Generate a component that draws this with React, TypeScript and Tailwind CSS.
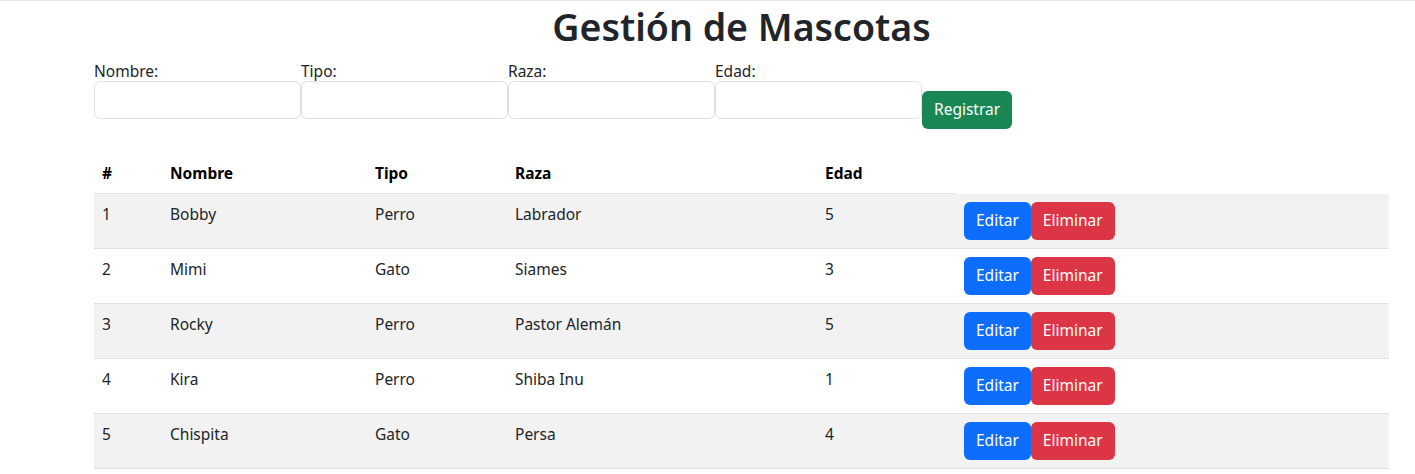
const mascotas = [
  { id: 1, nombre: "Bobby", tipo: "Perro", raza: "Labrador", edad: 5 },
  { id: 2, nombre: "Mimi", tipo: "Gato", raza: "Siames", edad: 3 },
  { id: 3, nombre: "Rocky", tipo: "Perro", raza: "Pastor Alemán", edad: 5 },
  { id: 4, nombre: "Kira", tipo: "Perro", raza: "Shiba Inu", edad: 1 },
  { id: 5, nombre: "Chispita", tipo: "Gato", raza: "Persa", edad: 4 },
];

const campos = ["Nombre", "Tipo", "Raza", "Edad"];

export default function App() {
  return (
    <div className="min-h-[474px] border-t border-[#e5e5e5] bg-white font-['Noto_Sans','Open_Sans',sans-serif] text-[15.5px] text-[#212529]">
      <div className="ml-[94px] w-[1295px]">
        <h1 className="pt-[2px] text-center text-[37.5px] font-semibold leading-[48px] text-[#212529]">
          Gestión de Mascotas
        </h1>

        <form className="mt-[10px] flex items-start" onSubmit={(e) => e.preventDefault()}>
          {campos.map((c) => (
            <div key={c} className="w-[207px]">
              <label className="block leading-[20px]">{c}:</label>
              <input
                type="text"
                className="block h-[38px] w-[207px] rounded-[6px] border border-[#dee2e6] bg-white px-3 outline-none"
              />
            </div>
          ))}
          <button
            type="submit"
            className="mt-[30px] h-[38px] rounded-[6px] bg-[#198754] px-3 text-white"
          >
            Registrar
          </button>
        </form>

        <table className="mt-[24px] w-full border-collapse text-left">
          <thead>
            <tr>
              <th className="w-[68px] border-b border-[#dee2e6] p-2 font-bold leading-6 text-black">#</th>
              <th className="w-[205px] border-b border-[#dee2e6] p-2 font-bold leading-6 text-black">Nombre</th>
              <th className="w-[140px] border-b border-[#dee2e6] p-2 font-bold leading-6 text-black">Tipo</th>
              <th className="w-[310px] border-b border-[#dee2e6] p-2 font-bold leading-6 text-black">Raza</th>
              <th className="w-[139px] border-b border-[#dee2e6] p-2 font-bold leading-6 text-black">Edad</th>
            </tr>
          </thead>
          <tbody>
            {mascotas.map((m, i) => (
              <tr
                key={m.id}
                className={`border-b border-[#dee2e6] ${i % 2 === 0 ? "bg-[#f2f2f2]" : "bg-white"}`}
              >
                <td className="p-2 align-top leading-6">{m.id}</td>
                <td className="p-2 align-top leading-6">{m.nombre}</td>
                <td className="p-2 align-top leading-6">{m.tipo}</td>
                <td className="p-2 align-top leading-6">{m.raza}</td>
                <td className="p-2 align-top leading-6">{m.edad}</td>
                <td className="p-2 align-top">
                  <div className="flex">
                    <button className="h-[38px] rounded-[6px] bg-[#0d6efd] px-3 text-white">Editar</button>
                    <button className="h-[38px] rounded-[6px] bg-[#dc3545] px-3 text-white">Eliminar</button>
                  </div>
                </td>
              </tr>
            ))}
          </tbody>
        </table>
      </div>
    </div>
  );
}
